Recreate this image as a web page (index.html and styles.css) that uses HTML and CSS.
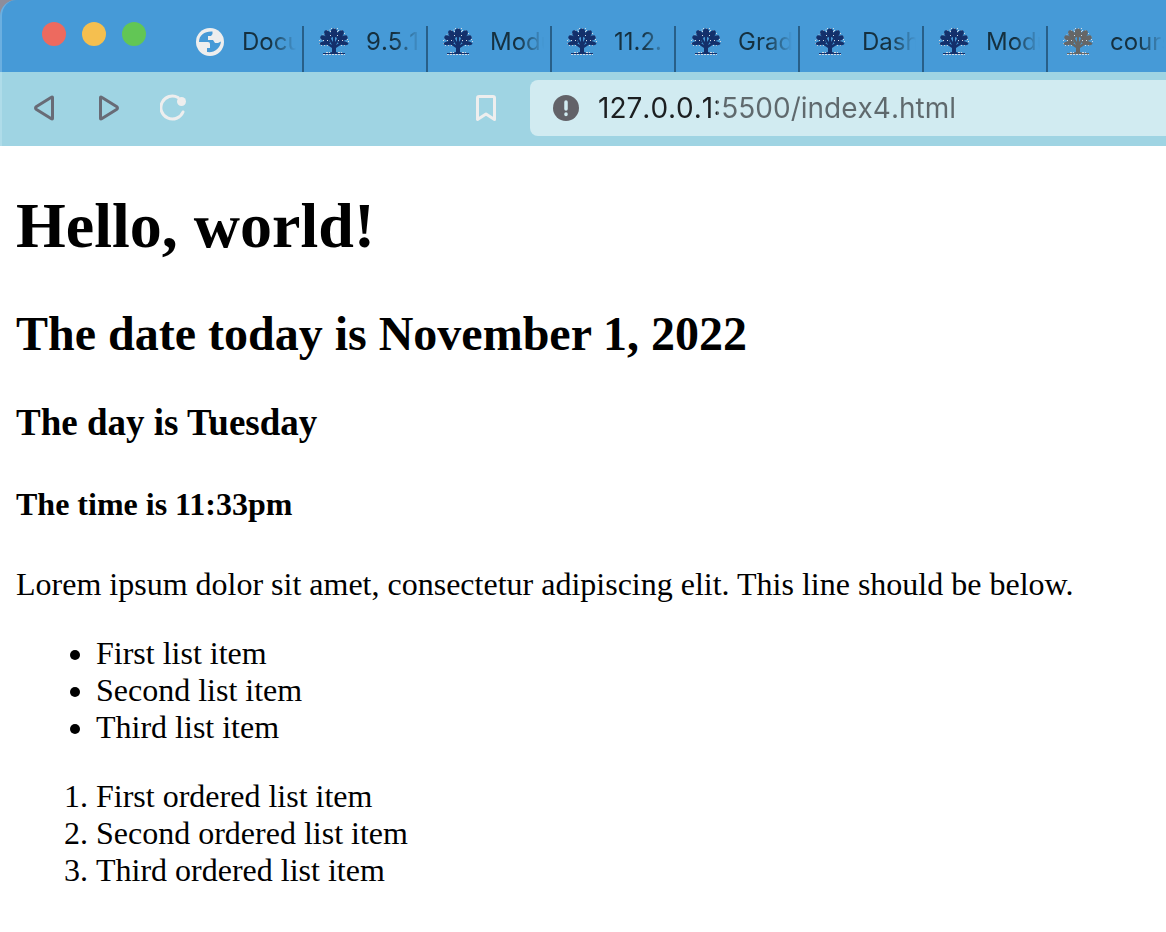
FILE: index.html
```html
<!DOCTYPE html>
<html lang="en">
<head>
<meta charset="utf-8">
<title>Document</title>
<link rel="stylesheet" href="styles.css">
</head>
<body>
<svg class="sprites" aria-hidden="true">
  <symbol id="tree" viewBox="0 0 30 28">
    <g fill="none" stroke="#d3dae4" stroke-dasharray="1 2">
      <path d="M.5 16V11.500H2V8.500H4V5.500H7V2.500H11V.5H19V2.500H23V5.500H26V8.500H28V11.500H29.500V16"/>
      <path d="M2 17.500h9M19 17.500h9"/>
    </g>
    <g fill="currentColor">
      <ellipse cx="15" cy="5" rx="3.500" ry="4.500"/>
      <ellipse cx="9" cy="6.500" rx="3" ry="5" transform="rotate(-38 9 6.500)"/>
      <ellipse cx="21" cy="6.500" rx="3" ry="5" transform="rotate(38 21 6.500)"/>
      <ellipse cx="6" cy="10.500" rx="5" ry="2.500" transform="rotate(22 6 10.500)"/>
      <ellipse cx="24" cy="10.500" rx="5" ry="2.500" transform="rotate(-22 24 10.500)"/>
      <ellipse cx="6" cy="15" rx="5.500" ry="2" transform="rotate(-8 6 15)"/>
      <ellipse cx="24" cy="15" rx="5.500" ry="2" transform="rotate(8 24 15)"/>
      <path d="M13 24V20L7 16l1-2 5 3-4-7 2-1 3 5V8h2v6l3-5 2 1-4 7 5-3 1 2-6 4v4l3 1h6v1H4v-1h6z"/>
    </g>
    <path fill="none" stroke="#d3dae4" stroke-dasharray="2 1" d="M4 26.500h22M7 24.500h4M19 24.500h4"/>
    <path fill="none" stroke="#d3dae4" stroke-dasharray="1 3" d="M11.500 3v8M18.500 3v8M4 12.500h7M19 12.500h7"/>
  </symbol>
</svg>
<header class="browser">
  <div class="tab-strip">
    <div class="window-controls">
      <button class="light close" aria-label="Close"></button>
      <button class="light minimize" aria-label="Minimize"></button>
      <button class="light maximize" aria-label="Maximize"></button>
    </div>
    <nav class="tabs" aria-label="Tabs">
      <button class="tab"><svg class="favicon" viewBox="0 0 30 28" aria-hidden="true"><circle cx="15" cy="14" r="14" fill="#eee"/><path fill="#469ad7" d="M17.500 3.500C10 3 4 7 4 14h9q2 0 2 2v4h-3v4c7 1 13-3 14-10.500L23 15h-3l-2-3h-5V8h3l1.500-2z"/></svg><span class="tab-title">Docu</span></button>
      <button class="tab"><svg class="favicon" aria-hidden="true"><use href="#tree"/></svg><span class="tab-title">9.5.1</span></button>
      <button class="tab"><svg class="favicon" aria-hidden="true"><use href="#tree"/></svg><span class="tab-title">Modu</span></button>
      <button class="tab"><svg class="favicon" aria-hidden="true"><use href="#tree"/></svg><span class="tab-title">11.2.</span></button>
      <button class="tab"><svg class="favicon" aria-hidden="true"><use href="#tree"/></svg><span class="tab-title">Grad</span></button>
      <button class="tab"><svg class="favicon" aria-hidden="true"><use href="#tree"/></svg><span class="tab-title">Dash</span></button>
      <button class="tab"><svg class="favicon" aria-hidden="true"><use href="#tree"/></svg><span class="tab-title">Modu</span></button>
      <button class="tab"><svg class="favicon muted" aria-hidden="true"><use href="#tree"/></svg><span class="tab-title">cours</span></button>
    </nav>
  </div>
  <div class="toolbar">
    <div class="history">
      <button class="tool" aria-label="Back"><svg width="28" height="28" viewBox="0 0 28 28"><path d="M20.500 3.500v21q0 1-1.500 0L4.500 15.500q-2-1.500 0-3L19 3.500q1.500-1 1.500 0z" fill="none" stroke="#686b76" stroke-width="3" stroke-linejoin="round"/></svg></button>
      <button class="tool" aria-label="Forward"><svg width="28" height="28" viewBox="0 0 28 28"><path d="M4.500 3.500v21q0 1 1.500 0l14.500-9q2-1.500 0-3L6 3.500q-1.500-1-1.500 0z" fill="none" stroke="#686b76" stroke-width="3" stroke-linejoin="round"/></svg></button>
      <button class="tool" aria-label="Reload"><svg width="28" height="28" viewBox="0 0 28 28"><path d="M18 3.500A11.500 11.500 0 1 0 23 18" fill="none" stroke="#eee" stroke-width="3" stroke-linecap="round"/><circle cx="21.500" cy="7.500" r="4.500" fill="#eee"/></svg></button>
    </div>
    <button class="tool" aria-label="Bookmark"><svg width="28" height="28" viewBox="0 0 28 28"><path d="M5.500 4q0-1.500 1.500-1.500h14q1.500 0 1.500 1.500v21.500L14 20l-8.500 5.500z" fill="none" stroke="#eee" stroke-width="3" stroke-linejoin="round"/></svg></button>
    <label class="address">
      <svg class="site-info" viewBox="0 0 26 26" role="img" aria-label="Address"><circle cx="13" cy="13" r="13" fill="#626268"/><path d="M13 7v7M13 19v.5" stroke="#d1ebf1" stroke-width="3.500" stroke-linecap="round"/></svg>
      <input class="url" type="text" value="127.0.0.1:5500/index4.html" spellcheck="false">
    </label>
  </div>
</header>
<main class="page">
  <h1>Hello, world!</h1>
  <h2>The date today is November 1, 2022</h2>
  <h3>The day is Tuesday</h3>
  <h4>The time is 11:33pm</h4>
  <p>Lorem ipsum dolor sit amet, consectetur adipiscing elit. This line should be below.</p>
  <ul>
    <li>First list item</li>
    <li>Second list item</li>
    <li>Third list item</li>
  </ul>
  <ol>
    <li>First ordered list item</li>
    <li>Second ordered list item</li>
    <li>Third ordered list item</li>
  </ol>
</main>
</body>
</html>
```
FILE: styles.css
```css
* { box-sizing: border-box; }
body { margin: 0; background: #fff; color: #000; }
button { border: 0; padding: 0; background: none; font: inherit; color: inherit; }
.sprites { display: none; }

.browser { background: #8d8d9b; font-family: Inter, sans-serif; }
.tab-strip {
  display: flex;
  align-items: flex-end;
  height: 72px;
  overflow: hidden;
  background: #469ad7;
  border-left: 2px solid #6bafe0;
  border-top-left-radius: 16px;
}
.window-controls {
  flex: none;
  display: flex;
  gap: 16px;
  width: 178px;
  padding: 0 0 26px 40px;
}
.light { width: 24px; height: 24px; border-radius: 50%; }
.close { background: #ed6a5f; }
.minimize { background: #f5bf4f; }
.maximize { background: #62c655; }

.tabs { flex: 1; min-width: 0; display: flex; }
.tab {
  flex: none;
  display: flex;
  gap: 17px;
  width: 124px;
  height: 46px;
  padding: 2px 0 0 15px;
  border-right: 2px solid #285f88;
  color: #15303f;
  font-size: 24px;
  font-kerning: none;
  line-height: 28px;
  text-align: left;
}
.tab:last-child { border-right: 0; }
.favicon { flex: none; width: 30px; height: 28px; color: #14306b; }
.muted { color: #666; }
.tab-title {
  width: 54px;
  overflow: hidden;
  white-space: nowrap;
  -webkit-mask-image: linear-gradient(to right, #000 28px, transparent 54px);
  mask-image: linear-gradient(to right, #000 28px, transparent 54px);
}

.toolbar {
  display: flex;
  align-items: center;
  height: 74px;
  padding-bottom: 2px;
  background: #9fd4e3;
  border-left: 2px solid #afdce9;
}
.history { flex: none; display: flex; gap: 36px; width: 440px; padding-left: 30px; }
.tool { flex: none; display: flex; width: 28px; height: 28px; }
.toolbar > .tool { margin: 0 30px; }
.address {
  flex: 1;
  min-width: 0;
  display: flex;
  align-items: center;
  gap: 19px;
  height: 56px;
  padding-left: 23px;
  background: #d1ebf1;
  border-radius: 8px 0 0 8px;
}
.site-info { flex: none; width: 26px; height: 26px; }
.url {
  flex: 1;
  min-width: 0;
  border: 0;
  padding: 0;
  outline: 0;
  font: 28px/36px Inter, sans-serif;
  font-kerning: none;
  color: transparent;
  background: linear-gradient(to right, #1c1f21 119px, #5f696d 119px);
  -webkit-background-clip: text;
  background-clip: text;
}

.page {
  display: flow-root;
  padding: 0 16px;
  font: 32px/37px "Liberation Serif", "Times New Roman", serif;
}
.page h1 { margin: 43px 0; font-size: 64px; line-height: 74px; }
.page h2 { margin: 40px 0; font-size: 48px; line-height: 55px; }
.page h3 { margin: 37px 0; font-size: 37px; line-height: 43px; }
.page h4 { margin: 42px 0 43px; font-size: 32px; line-height: 37px; }
.page p { margin: 32px 0; }
.page ul, .page ol { margin: 32px 0; padding-left: 80px; }
```
